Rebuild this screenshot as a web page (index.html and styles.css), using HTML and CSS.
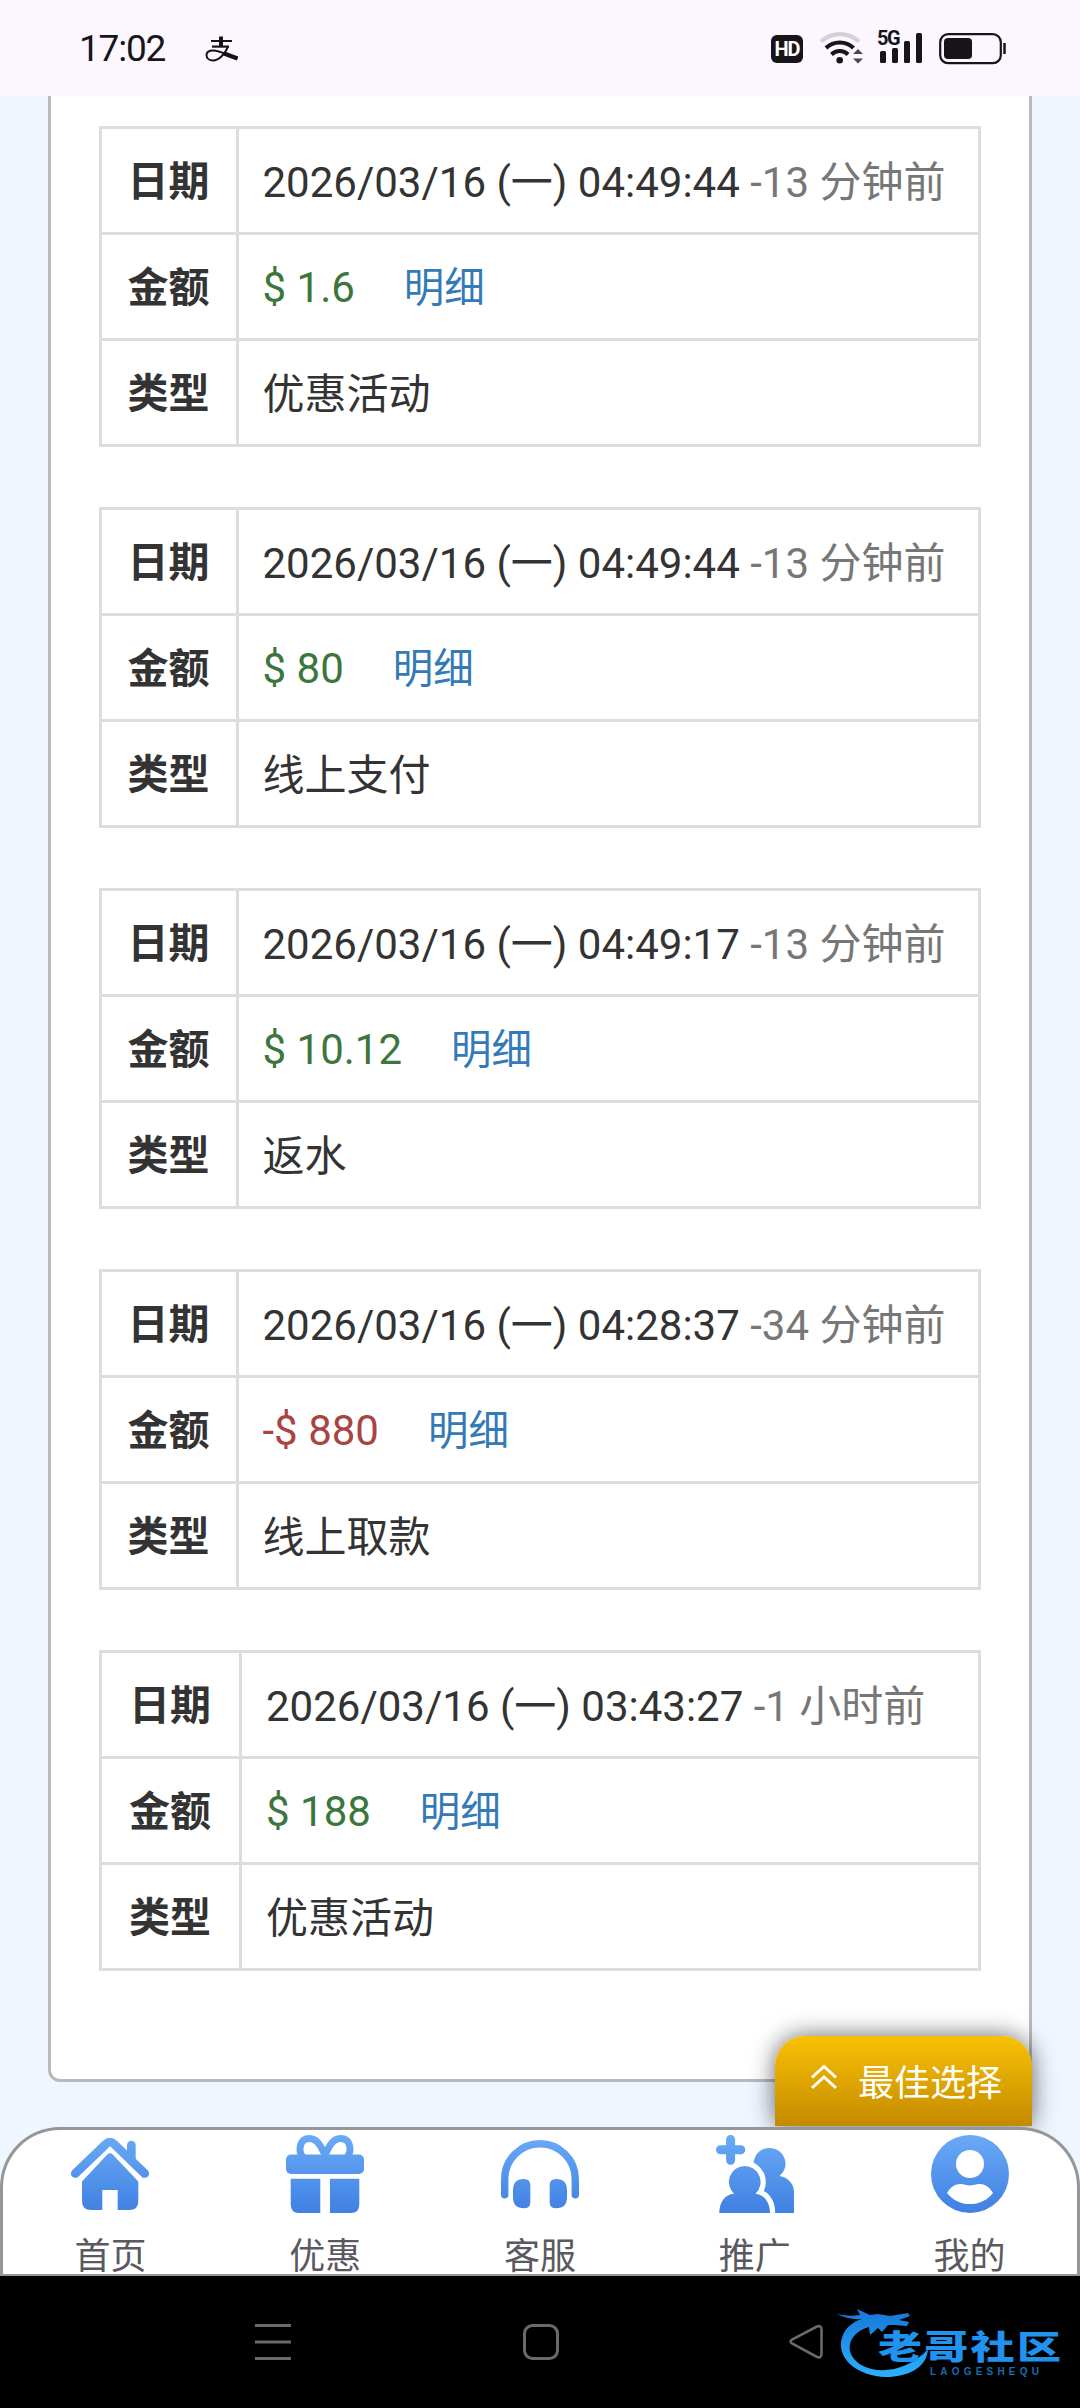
FILE: index.html
```html
<!DOCTYPE html>
<html lang="zh-CN">
<head>
<meta charset="utf-8">
<title>交易记录</title>
<link rel="stylesheet" href="styles.css">
</head>
<body>
<div class="screen">
  <header class="status">
    <span class="clock">17:02</span>
    <svg class="pay" viewBox="0 0 34 28" width="34" height="28"><g fill="none" stroke="#151316" stroke-linecap="butt"><path d="M6 6H27" stroke-width="2"/><path d="M7 11.6H24" stroke-width="2.2"/><path d="M16 1.5V12" stroke-width="4"/><path d="M23 11.6C20 19 14 25.5 8 25.5C4 25.5 1.5 23 1.5 20C1.5 17 4.500 15.500 8 15.500C14 15.500 22 19.500 32.500 23.500" stroke-width="2"/><path d="M19 18.500L32.500 23.500" stroke-width="4.500"/></g></svg>
    <div class="status-icons">
      <span class="hd">HD</span>
      <svg class="wifi" viewBox="0 0 44 34" width="44" height="34"><g fill="none" stroke="#17151a"><path d="M2 11.500A28 28 0 0 1 40 11.500" stroke="#d5d0d8" stroke-width="4.200"/><path d="M7 18A20 20 0 0 1 34.500 18" stroke-width="4.200"/><path d="M12.500 24.500A11.500 11.500 0 0 1 29 24.500" stroke-width="4"/></g><circle cx="20.700" cy="30.300" r="3.300" fill="#17151a"/><path d="M34 24L39 19L44 24ZM34 28.500H44L39 33.500Z" fill="#4b474f"/></svg>
      <div class="signal"><span class="net">5G</span><i class="s1"></i><i class="s2"></i><i class="s3"></i><i class="s4"></i></div>
      <svg class="battery" viewBox="0 0 68 32" width="68" height="32"><rect x="1.200" y="1.200" width="60.600" height="29" rx="8" fill="none" stroke="#17151a" stroke-width="2.200"/><rect x="5" y="5" width="28" height="21" rx="4" fill="#17151a"/><path d="M65.500 10V21" stroke="#17151a" stroke-width="2.500"/></svg>
    </div>
  </header>

  <main class="page">
    <section class="card">
      <table class="record">
        <tr><th>日期</th><td>2026/03/16 (一) 04:49:44 <span class="ago">-13 分钟前</span></td></tr>
        <tr><th>金额</th><td><span class="in">$ 1.6</span><a class="detail">明细</a></td></tr>
        <tr><th>类型</th><td>优惠活动</td></tr>
      </table>
      <table class="record">
        <tr><th>日期</th><td>2026/03/16 (一) 04:49:44 <span class="ago">-13 分钟前</span></td></tr>
        <tr><th>金额</th><td><span class="in">$ 80</span><a class="detail">明细</a></td></tr>
        <tr><th>类型</th><td>线上支付</td></tr>
      </table>
      <table class="record">
        <tr><th>日期</th><td>2026/03/16 (一) 04:49:17 <span class="ago">-13 分钟前</span></td></tr>
        <tr><th>金额</th><td><span class="in">$ 10.12</span><a class="detail">明细</a></td></tr>
        <tr><th>类型</th><td>返水</td></tr>
      </table>
      <table class="record">
        <tr><th>日期</th><td>2026/03/16 (一) 04:28:37 <span class="ago">-34 分钟前</span></td></tr>
        <tr><th>金额</th><td><span class="out">-$ 880</span><a class="detail">明细</a></td></tr>
        <tr><th>类型</th><td>线上取款</td></tr>
      </table>
      <table class="record wide">
        <tr><th>日期</th><td>2026/03/16 (一) 03:43:27 <span class="ago">-1 小时前</span></td></tr>
        <tr><th>金额</th><td><span class="in">$ 188</span><a class="detail">明细</a></td></tr>
        <tr><th>类型</th><td>优惠活动</td></tr>
      </table>
    </section>
    <div class="best">
      <svg viewBox="0 0 28 28" width="28" height="28"><path d="M2 13.500L14 2.500L26 13.500M2 24L14 13L26 24" fill="none" stroke="#fff" stroke-width="3"/></svg>
      <span>最佳选择</span>
    </div>
  </main>

  <nav class="tabs">
    <div class="tab">
      <svg viewBox="0 0 78 78" width="78" height="78"><defs><linearGradient id="blue" gradientUnits="userSpaceOnUse" x1="0" y1="0" x2="0" y2="78"><stop offset="0" stop-color="#6aaaf6"/><stop offset="1" stop-color="#3f80e2"/></linearGradient></defs><path d="M4.300 38.500L35 9Q39 5 43 9L73.700 38.500" fill="none" stroke="url(#blue)" stroke-width="8.700" stroke-linecap="round"/><path d="M56 24V10a4.300 4.300 0 0 1 8.700 0V32Z" fill="url(#blue)"/><path d="M36.500 19.300Q39 17 41.500 19.300L67.300 46.500V66Q67.300 75 58.500 75H46.700V55H31.300V75H20Q11 75 11 66V46.500Z" fill="url(#blue)"/></svg>
      <span>首页</span>
    </div>
    <div class="tab">
      <svg viewBox="0 0 78 78" width="78" height="78"><path d="M16.500 22C12 15 13.500 3.600 23.500 3.600C31 3.600 35 11 39 20C43 11 47 3.600 54.500 3.600C64.500 3.600 66 15 61.500 22" fill="none" stroke="url(#blue)" stroke-width="7"/><rect y="19.500" width="78" height="19.500" rx="5" fill="url(#blue)"/><path d="M4.700 43.700H34.300V78H13Q4.700 78 4.700 69.500ZM44 43.700H73.300V69.500Q73.300 78 65 78H44Z" fill="url(#blue)"/></svg>
      <span>优惠</span>
    </div>
    <div class="tab">
      <svg viewBox="0 0 78 78" width="78" height="78"><path d="M3.700 59.700V44a35.300 35.300 0 0 1 70.600 0V59.700" fill="none" stroke="url(#blue)" stroke-width="7.400" stroke-linecap="round"/><path d="M23 44Q29.300 44 29.300 50V67.500Q29.300 73.300 23 73.300Q12 73.300 12 62V55Q12 44 23 44ZM55 44Q66 44 66 55V62Q66 73.300 55 73.300Q48.700 73.300 48.700 67.500V50Q48.700 44 55 44Z" fill="url(#blue)"/></svg>
      <span>客服</span>
    </div>
    <div class="tab">
      <svg viewBox="0 0 78 78" width="78" height="78"><path d="M53 13A15.700 15.700 0 0 1 63.500 41C72 42 78 49 78 57V78H40V37A15.700 15.700 0 0 1 53 13Z" fill="url(#blue)"/><path d="M28.700 31A16 16 0 0 1 39.500 58.700C48 59.500 54 67 54 78H3.300C3.300 67 9 59.500 18 58.700A16 16 0 0 1 28.700 31Z" fill="#fff" stroke="#fff" stroke-width="10.400"/><path d="M28.700 31A16 16 0 0 1 39.500 58.700C48 59.500 54 67 54 78H3.300C3.300 67 9 59.500 18 58.700A16 16 0 0 1 28.700 31Z" fill="url(#blue)"/><path d="M14.600 4.500V25.200M4.500 14.800H24.800" fill="none" stroke="url(#blue)" stroke-width="9" stroke-linecap="round"/></svg>
      <span>推广</span>
    </div>
    <div class="tab">
      <svg viewBox="0 0 78 78" width="78" height="78"><circle cx="39" cy="39" r="39" fill="url(#blue)"/><circle cx="39" cy="29" r="14" fill="#fff"/><path d="M16 58C20 51 26 48 32 49.300Q39 51.500 46 49.300C52 48 58 51 62 58C51 72.800 27 72.800 16 58Z" fill="#fff"/></svg>
      <span>我的</span>
    </div>
  </nav>

  <footer class="system">
    <svg viewBox="0 0 36 36" width="36" height="36"><path d="M0 1.500H36M0 18H36M0 34.500H36" stroke="#6a6a6a" stroke-width="3"/></svg>
    <svg viewBox="0 0 36 36" width="36" height="36"><rect x="1.500" y="1.500" width="33" height="33" rx="8" fill="none" stroke="#6a6a6a" stroke-width="3"/></svg>
    <svg class="back" viewBox="0 0 36 36" width="36" height="36"><path d="M29 2.500L4 15.500Q1 17.500 4 19.500L29 33Q33.500 34.500 33.500 30V5.500Q33.500 1 29 2.500Z" fill="none" stroke="#6a6a6a" stroke-width="2.600"/></svg>
    <div class="brand">
      <svg viewBox="0 0 96 80" width="96" height="80"><defs><linearGradient id="dragon" x1="0" y1="0" x2="0" y2="1"><stop offset="0" stop-color="#1677d8"/><stop offset="1" stop-color="#2bb0ff"/></linearGradient></defs><path d="M-1 13Q10 16 22 14L19 8L32 14L40 13L52 15L70 12L72 15L61 19L71 21L69 25L57 24L50 24L44 31L40 27L32 34L31 26C14 31 8 44 14 55C25 74 65 76 90 48C89 67 69 76 48 76C20 75 1 59 3 41C5 28 14 21 24 18Q10 19 -1 13Z" fill="url(#dragon)"/></svg>
      <span class="brand-cn">老哥社区</span>
      <span class="brand-en">LAOGESHEQU</span>
    </div>
  </footer>
</div>
</body>
</html>
```
FILE: styles.css
```css
* { box-sizing: border-box; }
body {
  margin: 0;
  background: #eff6ff;
  font-family: Roboto, "Noto Sans CJK SC", sans-serif;
  color: #333;
}
.screen { display: flex; flex-direction: column; width: 1080px; height: 2408px; overflow: hidden; }
svg { display: block; flex: none; }

.status { height: 96px; flex: none; display: flex; align-items: flex-start; background: #fcf7ff; padding: 0 73px 0 79px; color: #17151a; }
.clock { width: 126px; margin-top: 29px; font-size: 37px; line-height: 40px; letter-spacing: -1.200px; }
.pay { margin-top: 35px; }
.status-icons { margin-left: auto; display: flex; align-items: flex-start; }
.hd { width: 32px; height: 28px; margin: 35px 16px 0 0; border-radius: 6px; background: #17151a; color: #fff; font: 700 20px/29px "Roboto", sans-serif; text-align: center; letter-spacing: -1px; }
.wifi { margin: 30px 14px 0 0; }
.signal { position: relative; display: flex; align-items: flex-end; gap: 6px; width: 46px; height: 33px; margin: 30px 16px 0 0; padding-left: 3px; }
.signal i { width: 6px; border-radius: 1.500px; background: #17151a; }
.s1 { height: 12px; } .s2 { height: 15px; } .s3 { height: 22px; } .s4 { height: 30px; }
.net { position: absolute; left: 0; top: -1px; font: 700 20px/18px Roboto, sans-serif; letter-spacing: -1.500px; }
.battery { margin-top: 33px; }

.page { position: relative; height: 2031px; flex: none; padding: 0 48px; }
.card { height: 1986px; padding: 30px 48px 0; border: 3px solid #b8b9ba; border-top: 0; border-radius: 0 0 12px 12px; background: #fff; }
.record { width: 882px; table-layout: fixed; border-collapse: separate; border-spacing: 0; border: solid #ddd; border-width: 3px 0 0 3px; margin-bottom: 60px; font-size: 42px; line-height: 55px; }
.record th, .record td { height: 106px; padding: 3px 24px 0 23.500px; border: solid #ddd; border-width: 0 3px 3px 0; text-align: left; white-space: nowrap; }
.record th { width: 137px; padding: 4px 1px 0 0; text-align: center; font-weight: 700; font-size: 41px; }
.record.wide th { width: 140px; }
.record.wide td { padding-left: 24px; }
.ago { color: #777; }
.in { color: #3c763d; }
.out { color: #a94442; }
.detail { margin-left: 49px; color: #337ab7; font-size: 40.500px; }

.best { position: absolute; left: 775px; top: 1940px; width: 257px; height: 90px; display: flex; align-items: center; gap: 20px; padding-left: 35px; border-radius: 30px 30px 0 0; background: linear-gradient(#f9c104, #c48a00); box-shadow: 0 0 24px rgba(0,0,0,.6); color: #fff; font-size: 36px; line-height: 50px; }
.best svg { margin-bottom: 6px; }
.best span { margin-top: 5px; }

.tabs { position: relative; height: 149px; flex: none; display: flex; border: 3px solid #949698; border-bottom-width: 2px; border-radius: 60px 60px 0 0; background: #fff; padding-top: 5px; }
.tab { flex: 1; display: flex; flex-direction: column; align-items: center; gap: 18px; color: #5a5960; font-size: 36px; line-height: 52px; }
.tabs::before { content: ""; position: absolute; z-index: -1; inset: -3px; background: #eff6ff; }

.system { position: relative; z-index: 1; height: 132px; flex: none; display: flex; align-items: flex-start; background: #000; padding: 48px 0 0 255px; }
.system > svg + svg { margin-left: 232px; }
.system > .back.back { margin-left: 229px; }
.brand { position: absolute; left: 838px; top: 25px; width: 230px; height: 84px; color: #1f93ee; }
.brand svg { position: absolute; left: 0; top: 0; overflow: visible; }
.brand-cn { position: absolute; left: 40px; top: 22px; font: 900 44px/44px "Noto Sans CJK SC", sans-serif; letter-spacing: 2.300px; white-space: nowrap; transform: scaleY(.75); }
.brand-en { position: absolute; left: 92px; top: 66px; font: 700 10px/10px "Liberation Sans", sans-serif; letter-spacing: 4.200px; color: #1a6cae; }
```
